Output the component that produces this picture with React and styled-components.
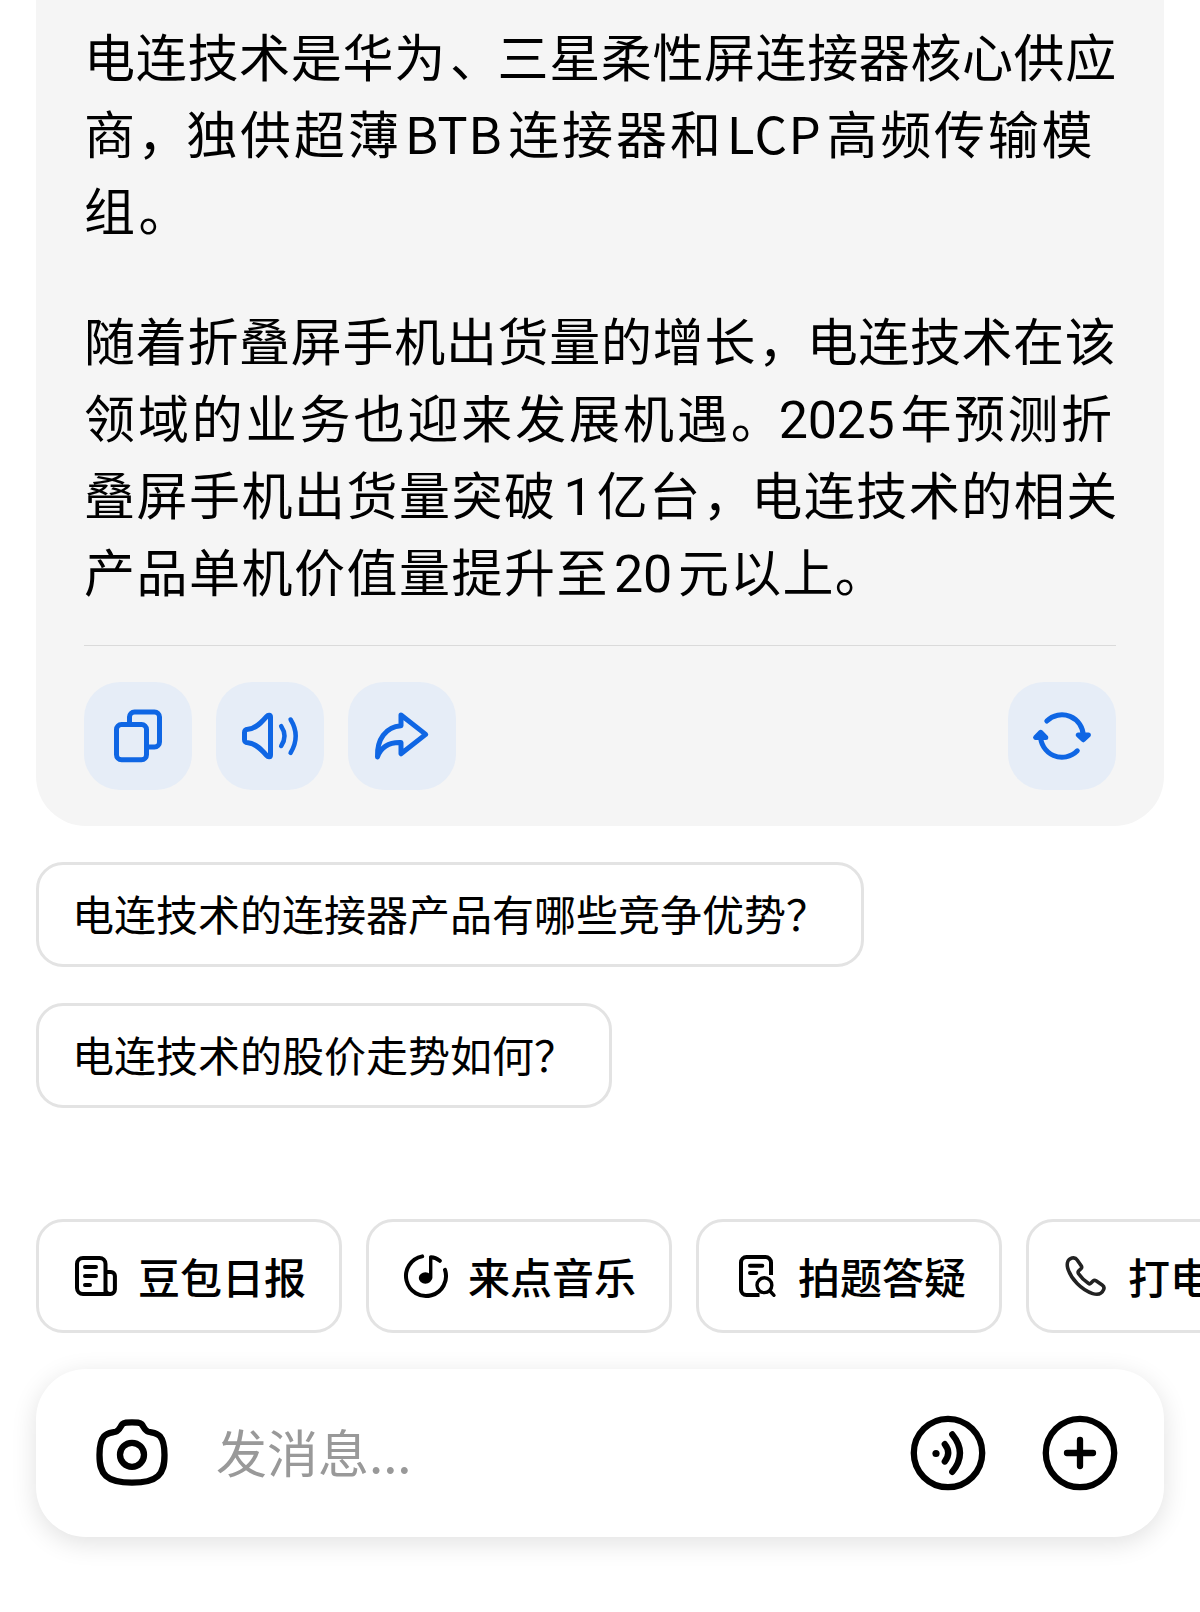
import React from "react";
import styled, { createGlobalStyle } from "styled-components";

const GlobalStyle = createGlobalStyle`
  * { box-sizing: border-box; }
  body {
    margin: 0;
    background: #fff;
    color: #000;
    font-family: "Noto Sans CJK SC", "Noto Sans", sans-serif;
    overflow: hidden;
  }
`;

const Screen = styled.main`
  width: 1200px;
  height: 1612px;
  padding: 0 36px;
  overflow: hidden;
  display: flex;
  flex-direction: column;
  background: #fff;
`;

const MessageCard = styled.article`
  height: 826px;
  padding: 17px 48px 36px;
  background: #f5f5f5;
  border-radius: 0 0 50px 50px;
  display: flex;
  flex-direction: column;
`;

const Paragraph = styled.p`
  margin: 0 0 ${(p) => p.$after}px;
  font-size: 51px;
  line-height: 77px;
`;

const Line = styled.span`
  display: flex;
  align-items: baseline;
  height: 77px;
  white-space: nowrap;
`;

const Run = styled.span`
  letter-spacing: ${(p) => p.$track}px;
  margin-left: ${(p) => p.$lead || 0}px;
`;

const NumberRun = styled(Run)`
  font-family: Roboto, "Noto Sans CJK SC", sans-serif;
  font-size: 52px;
`;

const ActionBar = styled.div`
  display: flex;
  gap: 24px;
  padding-top: 36px;
  border-top: 1px solid #dadada;
`;

const ActionButton = styled.button`
  width: 108px;
  height: 108px;
  padding: 0;
  border: 0;
  border-radius: 36px;
  background: #e6edf7;
  color: #0f66e4;
  margin-left: ${(p) => (p.$end ? "auto" : "0")};
`;

const Stroked = styled.svg`
  display: block;
  flex: none;
  fill: none;
  stroke: currentColor;
  stroke-width: ${(p) => p.$weight};
  stroke-linecap: round;
  stroke-linejoin: round;
`;

const Suggestions = styled.div`
  display: flex;
  flex-direction: column;
  align-items: flex-start;
  gap: 36px;
  margin-top: 36px;
`;

const Suggestion = styled.button`
  height: 105px;
  padding: 0 33px 4px;
  border: 3px solid #e3e3e3;
  border-radius: 27px;
  background: #fff;
  color: #000;
  font: 400 42px/60px "Noto Sans CJK SC", sans-serif;
  white-space: nowrap;
`;

const Shortcuts = styled.nav`
  display: flex;
  gap: 24px;
  margin: 111px -36px 0 0;
  overflow: hidden;
`;

const Shortcut = styled.button`
  display: flex;
  align-items: center;
  flex: none;
  gap: 18px;
  height: 114px;
  padding: 0 33px;
  border: 3px solid #e3e3e3;
  border-radius: 27px;
  background: #fff;
  color: #000;
  font: 500 42px/60px "Noto Sans CJK SC", sans-serif;
  white-space: nowrap;
`;

const Composer = styled.div`
  display: flex;
  align-items: center;
  height: 168px;
  margin-top: 36px;
  padding: 0 46px 0 60px;
  border-radius: 50px;
  background: #fff;
  box-shadow: 0 6px 26px rgba(0, 0, 0, 0.12);
`;

const Placeholder = styled.span`
  flex: 1;
  margin-left: 48px;
  padding-bottom: 3px;
  color: #999;
  font-size: 51px;
  line-height: 77px;
`;

const ComposerTools = styled.div`
  display: flex;
  gap: 56px;
`;

const Icon = ({ size, weight, children }) => (
  <Stroked width={size} height={size} viewBox={`0 0 ${size} ${size}`} $weight={weight}>
    {children}
  </Stroked>
);

const CopyIcon = () => (
  <Icon size={108} weight={5}>
    <rect x="32.5" y="42.5" width="30" height="35.3" rx="5" />
    <path d="M45.5 41V35a5 5 0 0 1 5-5h20a5 5 0 0 1 5 5v25a5 5 0 0 1-5 5h-6.5" />
  </Icon>
);

const SpeakerIcon = () => (
  <Icon size={108} weight={5}>
    <path d="M32 47.2C40 46.5 45.8 40 50.5 34.6C52.2 32.6 54.5 32.6 54.5 35V73C54.5 75.4 52.2 75.4 50.5 73.4C45.8 68 40 61.5 32 60.8C29.5 60.6 28.5 60 28.5 57.5V50.5C28.5 48 29.5 47.4 32 47.2Z" />
    <path strokeWidth="4.5" d="M65.2 44.2Q71.8 54 65.2 64M74.6 37.5Q84.8 54 74.6 70.8" />
  </Icon>
);

const ShareIcon = () => (
  <Icon size={108} weight={5}>
    <path d="M53 33L77.7 52.4L53 71.8V60.6C42 60.2 33.5 64 29.5 74.8C28.8 57.5 37.5 44.8 53 43.7Z" />
  </Icon>
);

const RefreshIcon = () => (
  <Icon size={108} weight={5}>
    <path d="M38.8 39A21.4 21.4 0 0 1 75.3 54M32.6 53A21.4 21.4 0 0 0 69.3 68.8" />
    <path fill="currentColor" d="M70.2 53H80.4L75.3 57.8ZM27.6 55.5H37.8L32.7 50.3Z" />
  </Icon>
);

const NewsIcon = () => (
  <Icon size={48} weight={4}>
    <path d="M38.3 42H11a6 6 0 0 1-6-6V12a6 6 0 0 1 6-6h16.5a6 6 0 0 1 6 6v25.3a4.7 4.7 0 0 0 9.4 0V24a4 4 0 0 0-4-4h-5.4M33.5 36V42M38.3 42a4.7 4.7 0 0 0 4.6-4.7" />
    <path d="M13 15h11M13 24h11M13 33h5" />
  </Icon>
);

const MusicIcon = () => (
  <Icon size={48} weight={4}>
    <path d="M43 17.8A20 20 0 1 1 20.2 4.4M29 5.2C32 5.2 35 6.5 37.8 8.8" />
    <path strokeWidth="3.4" d="M28.7 5.5V26" />
    <ellipse cx="23.4" cy="26" rx="6.6" ry="5.8" fill="currentColor" stroke="none" />
  </Icon>
);

const SearchPageIcon = () => (
  <Icon size={48} weight={4}>
    <path strokeLinecap="butt" d="M39 23V10.5A5.5 5.5 0 0 0 33.5 5H14.5A5.5 5.5 0 0 0 9 10.5V37.5A5.5 5.5 0 0 0 14.5 43H27.5" />
    <path d="M18 13.7H30.3M18 21H24.3" />
    <g strokeWidth="3.4">
      <circle cx="32.4" cy="33.2" r="7.4" />
      <path d="M38 39L42 43.3" />
    </g>
  </Icon>
);

const PhoneIcon = () => (
  <Icon size={48} weight={3.6}>
    <path stroke="#222" d="M10 6.1C12.3 5.5 13.8 6 15 7.8L19.2 13.8C20 15 19.8 15.9 18.9 16.8L16.8 18.8C15.9 19.7 15.9 20.6 16.6 21.7C19.2 25.5 22.5 28.8 26.3 31.3C27.3 32 28.2 31.9 29 31.1L31 29.1C31.9 28.2 32.9 28 34 28.7L40.2 32.9C42 34.1 42.5 35.5 41.6 37.6C39.7 42 35.6 43.1 30.7 41.6C19.5 38 8.8 27 5.7 16C4.5 11.4 5.8 7.2 10 6.1Z" />
  </Icon>
);

const CameraIcon = () => (
  <Icon size={72} weight={6.3}>
    <path d="M36 5.3C31 5.3 28 5.3 26.3 7.2C24 10 23.5 13.6 19.5 14.7C15 15.8 11 15.8 8 19.3C4.8 23 3.5 30 3.5 38C3.5 48 4.8 54 10 59C15 63.6 24 65.7 36 65.7C48 65.7 57 63.6 62 59C67.2 54 68.5 48 68.5 38C68.5 30 67.2 23 64 19.3C61 15.8 57 15.8 52.5 14.7C48.5 13.6 48 10 45.7 7.2C44 5.3 41 5.3 36 5.3Z" />
    <circle cx="36" cy="37.8" r="12" />
  </Icon>
);

const VoiceIcon = () => (
  <Icon size={76} weight={6.3}>
    <circle cx="38" cy="38" r="34.2" />
    <circle cx="26" cy="38.5" r="3.6" fill="currentColor" stroke="none" />
    <path d="M34.8 29.2Q41.6 37.8 34.8 46.5M42.3 19.4Q57.6 38 42.3 56.8" />
  </Icon>
);

const PlusIcon = () => (
  <Icon size={76} weight={6.3}>
    <circle cx="38" cy="38" r="34.2" />
    <path d="M25 38H51M38 25V51" />
  </Icon>
);

// Each line is a list of [text, letter spacing, leading offset] runs.
const paragraphs = [
  {
    after: 53,
    lines: [
      [["电连技术是华为", 0.7], ["、", 0.7, 4], ["三星柔性屏连接器核心供应", 0.6, -4]],
      [["商", 0.6], ["，", 0.6, 2], ["独供超薄", 2.9, -3], ["BTB", 0.4, 3], ["连接器和", 2.9, 6], ["LCP", 1.5, 3], ["高频传输模", 2.8, 4]],
      [["组", 0.6], ["。", 0.6, 3]],
    ],
  },
  {
    after: 36,
    lines: [
      [["随着折叠屏手机出货量的增长", 0.7], ["，", 0.6, 2], ["电连技术在该", 0.6, -3]],
      [["领域的业务也迎来发展机遇。", 2.9], ["2025", -0.3, -6], ["年预测折", 2.5, 6]],
      [["叠屏手机出货量突破", 1.5], ["1", 0, 7], ["亿台", 1.5, 4], ["，", 1.5, 1], ["电连技术的相关", 1.5, -4]],
      [["产品单机价值量提升至", 1.5], ["20", -0.3, 5], ["元以上。", 1.3, 6]],
    ],
  },
];

const suggestions = ["电连技术的连接器产品有哪些竞争优势？", "电连技术的股价走势如何？"];

const shortcuts = [
  ["豆包日报", NewsIcon],
  ["来点音乐", MusicIcon],
  ["拍题答疑", SearchPageIcon],
  ["打电话", PhoneIcon],
];

export default function App() {
  return (
    <Screen>
      <GlobalStyle />
      <MessageCard>
        {paragraphs.map((p, i) => (
          <Paragraph key={i} $after={p.after}>
            {p.lines.map((runs, j) => (
              <Line key={j}>
                {runs.map(([text, track, lead], k) => {
                  const Part = /^\d+$/.test(text) ? NumberRun : Run;
                  return <Part key={k} $track={track} $lead={lead}>{text}</Part>;
                })}
              </Line>
            ))}
          </Paragraph>
        ))}
        <ActionBar>
          <ActionButton aria-label="复制"><CopyIcon /></ActionButton>
          <ActionButton aria-label="朗读"><SpeakerIcon /></ActionButton>
          <ActionButton aria-label="分享"><ShareIcon /></ActionButton>
          <ActionButton aria-label="重新生成" $end><RefreshIcon /></ActionButton>
        </ActionBar>
      </MessageCard>
      <Suggestions>
        {suggestions.map((text) => <Suggestion key={text}>{text}</Suggestion>)}
      </Suggestions>
      <Shortcuts>
        {shortcuts.map(([label, Glyph]) => (
          <Shortcut key={label}><Glyph />{label}</Shortcut>
        ))}
      </Shortcuts>
      <Composer>
        <CameraIcon />
        <Placeholder>发消息...</Placeholder>
        <ComposerTools>
          <VoiceIcon />
          <PlusIcon />
        </ComposerTools>
      </Composer>
    </Screen>
  );
}
